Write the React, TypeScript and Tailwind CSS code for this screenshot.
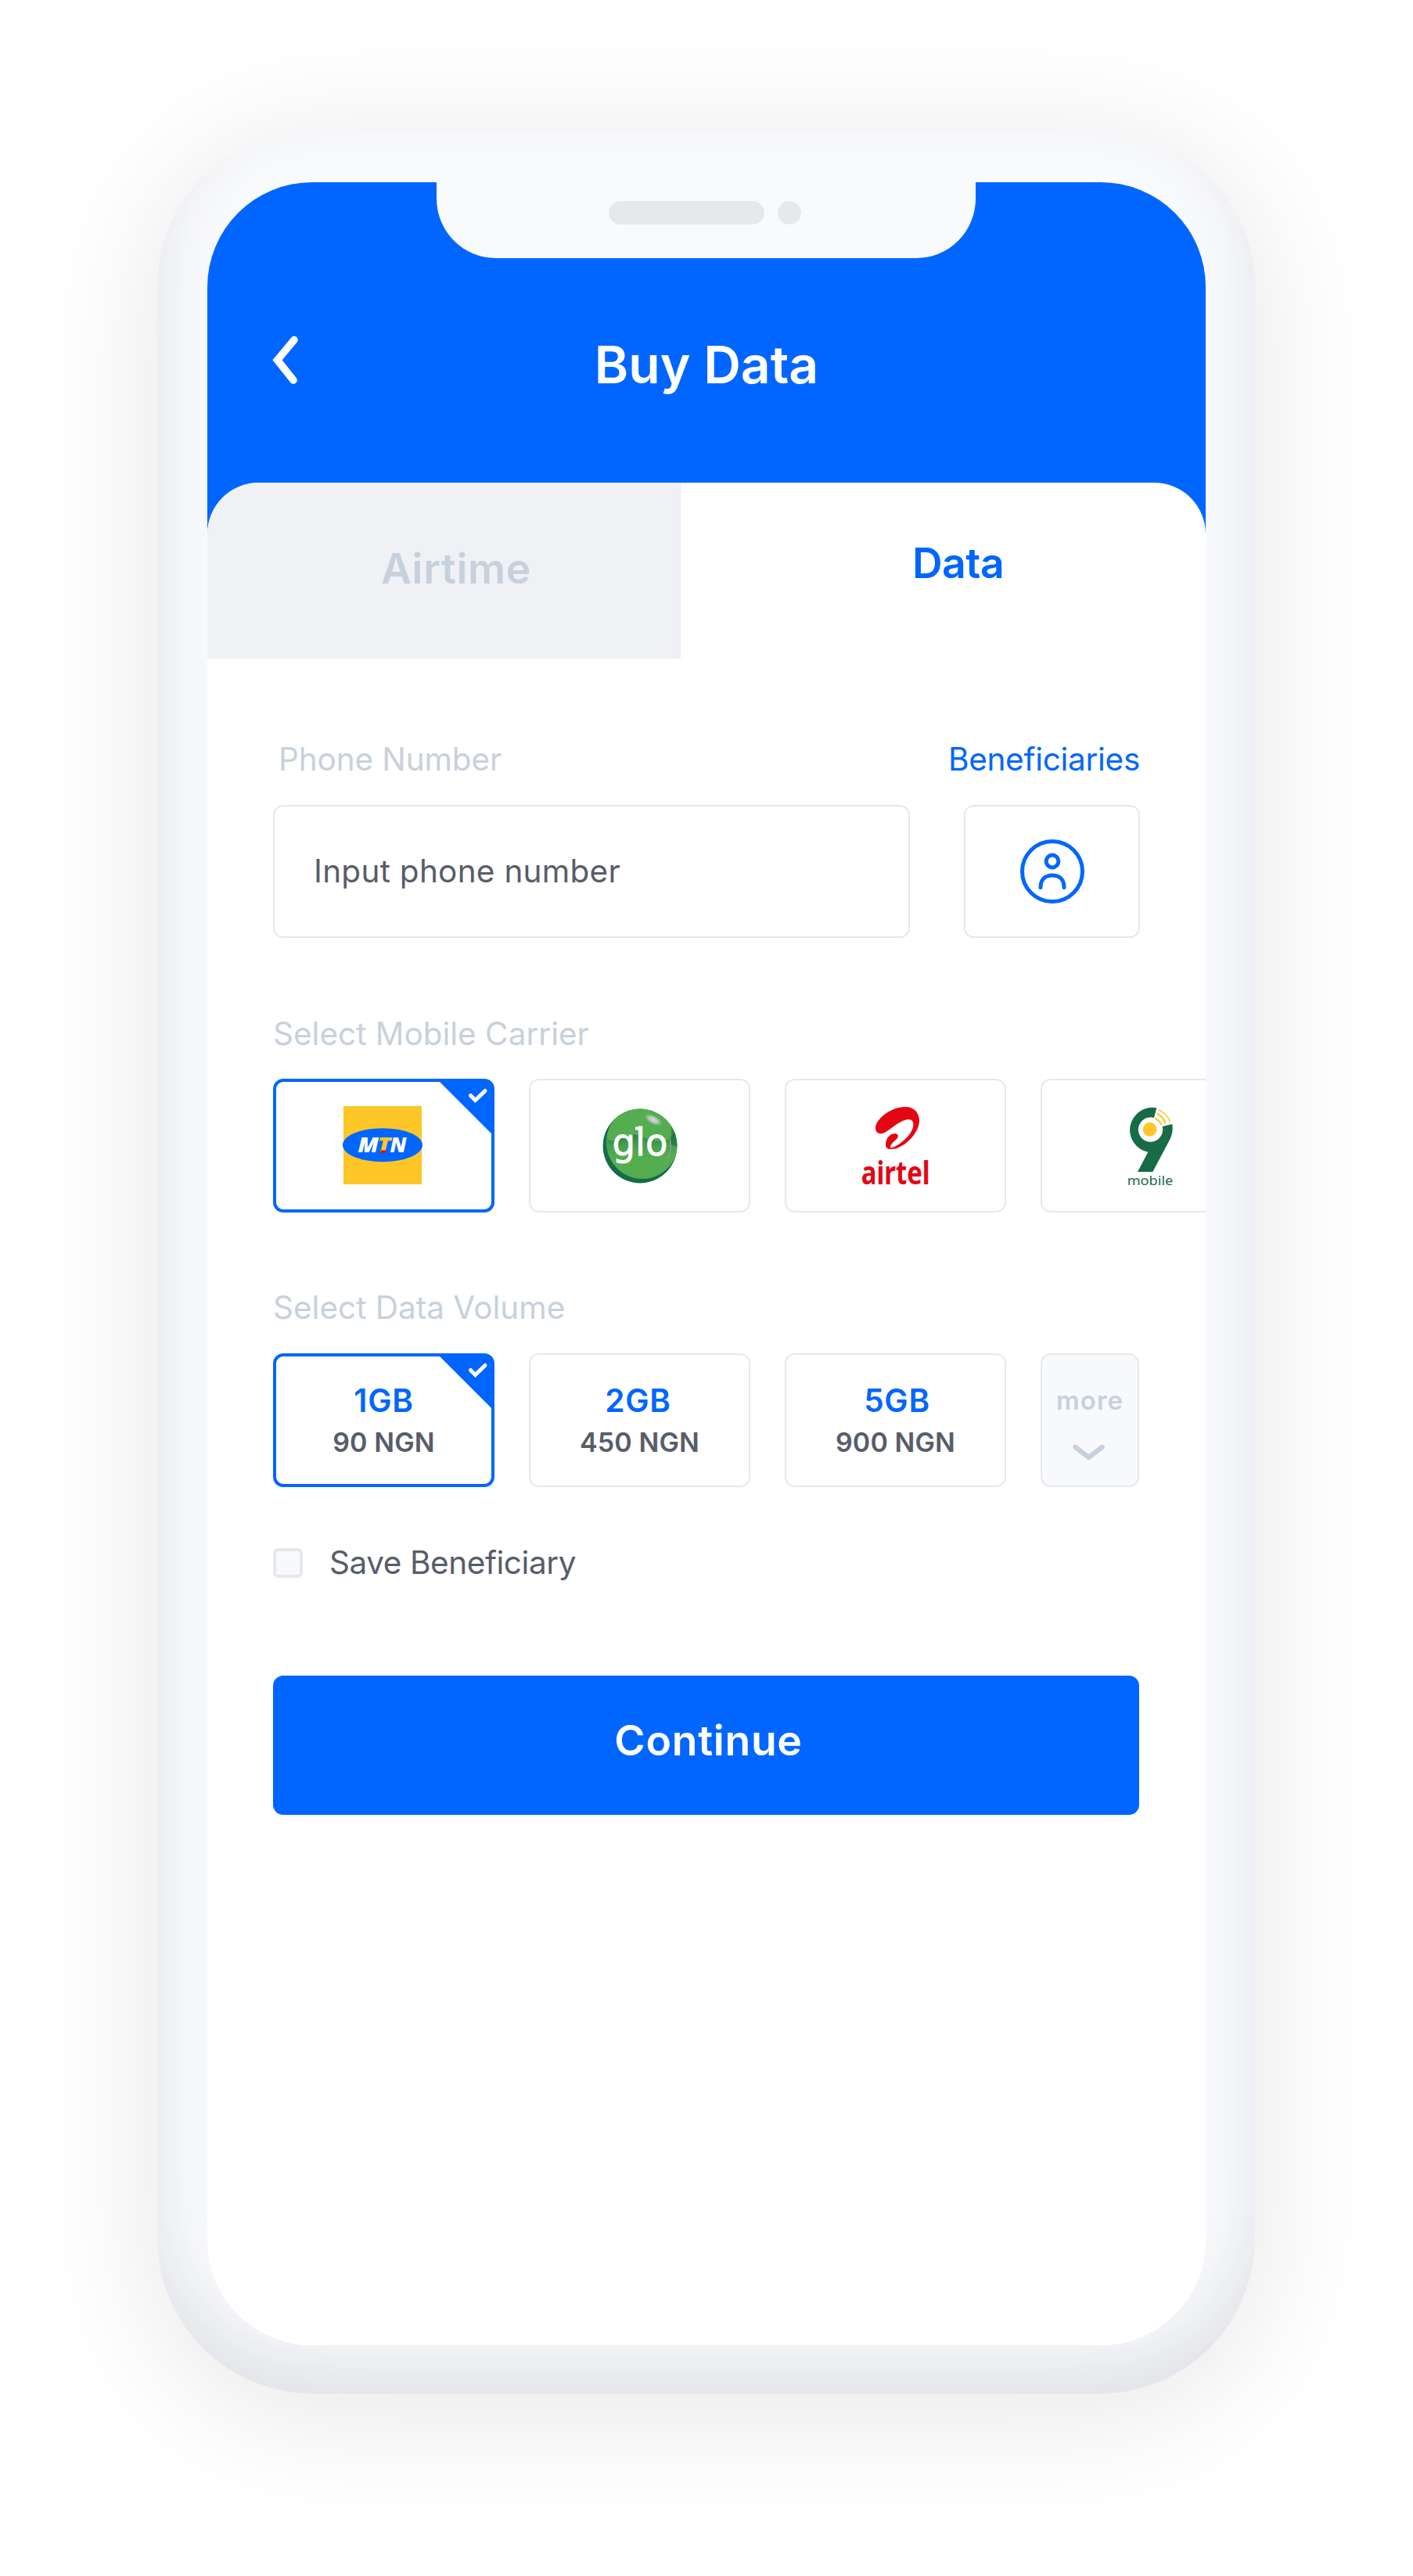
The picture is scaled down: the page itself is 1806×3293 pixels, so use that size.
import type { ReactNode } from "react";

function SelectedCorner() {
  return (
    <svg className="absolute -top-[4px] -right-[4px]" width="72" height="76" viewBox="0 0 72 76">
      <path d="M2 2H58Q70 2 70 14V72L68 70L2 4Z" fill="#0066ff" />
      <path d="M41.5 21.5L47.5 27.5L60 15.5" fill="none" stroke="#fff" strokeWidth="5" strokeLinecap="round" />
    </svg>
  );
}

function Tile({ selected, children }: { selected?: boolean; children: ReactNode }) {
  return (
    <div
      className={
        selected
          ? "relative flex h-[171px] w-[283px] shrink-0 flex-col items-center rounded-[13px] border-4 border-[#0066ff]"
          : "relative flex h-[171px] w-[283px] shrink-0 flex-col items-center rounded-[13px] border-2 border-[#e6e8ec]"
      }
    >
      {children}
      {selected && <SelectedCorner />}
    </div>
  );
}

function MtnLogo() {
  return (
    <svg className="mt-[29px] -ml-[3px]" width="104" height="104" viewBox="0 0 104 104">
      <rect x="2" y="2" width="100" height="100" fill="#fec627" />
      <ellipse cx="52" cy="51.7" rx="51" ry="21.5" fill="#0066ff" />
      <g fontFamily="Noto Sans" fontWeight="900" fontStyle="italic" fontSize="27">
        <text x="20.5" y="61.3" fill="#fff" textLength="26.5" lengthAdjust="spacingAndGlyphs">M</text>
        <text x="45.5" y="61.3" fill="#fec627" textLength="17" lengthAdjust="spacingAndGlyphs">T</text>
        <text x="61.5" y="61.3" fill="#fff" textLength="21" lengthAdjust="spacingAndGlyphs">N</text>
      </g>
      <path d="M50.2 58.6h6l-.7 3.2h-6z" fill="#e30613" />
    </svg>
  );
}

function GloLogo() {
  return (
    <svg className="mt-[36px]" width="96" height="96" viewBox="0 0 96 96">
      <defs>
        <linearGradient id="gloBand" x1="0" y1="0" x2="0" y2="1">
          <stop offset="0" stopColor="#176b47" stopOpacity=".9" />
          <stop offset="1" stopColor="#54ae4f" stopOpacity="0" />
        </linearGradient>
        <radialGradient id="gloShine">
          <stop offset="0" stopColor="#d4dbe3" />
          <stop offset=".5" stopColor="#b8c6bf" />
          <stop offset="1" stopColor="#8fb58c" stopOpacity="0" />
        </radialGradient>
        <clipPath id="gloClip">
          <circle cx="48" cy="48" r="47.4" />
        </clipPath>
      </defs>
      <g clipPath="url(#gloClip)">
        <circle cx="48" cy="48" r="48" fill="#176b47" />
        <ellipse cx="51" cy="43" rx="46" ry="47" fill="#54ae4f" />
        <path d="M6 38C12 46 22 36 35 33C50 32 60 46 84 40L94 28V56C80 64 60 67 44 68C28 68 12 66 6 60Z" fill="url(#gloBand)" />
        <path d="M88 18L97 32V50L88 46Z" fill="#176b47" opacity=".6" />
        <ellipse cx="65" cy="14.5" rx="13" ry="6" fill="url(#gloShine)" transform="rotate(28 65 14.5)" />
        <path d="M85 38Q90 60 74 79Q93 58 86.5 38Z" fill="#9a9fa0" opacity=".6" />
      </g>
      <text x="12.5" y="59.8" fontFamily="DejaVu Sans" fontSize="47.5" fill="#fff" stroke="#fff" strokeWidth=".8" textLength="71" lengthAdjust="spacingAndGlyphs">glo</text>
      <rect x="42" y="23.5" width="7" height="4" fill="#fff" />
    </svg>
  );
}

function AirtelLogo() {
  return (
    <svg className="mt-[33px]" width="88" height="104" viewBox="0 0 264 312">
      <path
        transform="translate(-357 -162)"
        fill="#e30613"
        d="M411 246C411 212 470 165 525 165C560 165 579 188 579 218C579 265 520 327 470 327C456 327 450 320 450 308C450 288 465 268 484 267C500 267 501 280 492 288C480 299 466 312 468 321C478 328 556 280 556 232C556 218 548 212 534 213C510 215 475 245 455 258C430 276 411 266 411 246Z"
      />
      <text x="-1" y="300" fontFamily="Noto Sans" fontWeight="700" fontSize="126" fill="#e30613" textLength="264" lengthAdjust="spacingAndGlyphs">airtel</text>
    </svg>
  );
}

function NineMobileLogo() {
  return (
    <svg className="mt-[33px] -ml-[4px]" width="60" height="106" viewBox="0 0 180 318">
      <g transform="translate(-419 -162)">
        <path
          fill="#176b47"
          d="M534 169A86 86 0 1 0 501 338L461 414H519L583 293C592 276 598 256 594 231L556 240A47 47 0 1 1 524 207Z"
        />
        <circle cx="508" cy="251" r="26.5" fill="#fec627" />
        <g fill="none" stroke="#fec627" strokeLinecap="round">
          <path d="M542 176Q572 190 586 221" strokeWidth="4.5" />
          <path d="M538 192Q558 203 567 225" strokeWidth="7" />
          <path d="M530 210Q544 217 551 231" strokeWidth="7" />
        </g>
      </g>
      <text x="2" y="302" fontFamily="Noto Sans" fontSize="49" fill="#176b47" textLength="176" lengthAdjust="spacingAndGlyphs">mobile</text>
    </svg>
  );
}

function Volume({ size, price, selected, className }: { size: string; price: string; selected?: boolean; className: string }) {
  return (
    <Tile selected={selected}>
      <div className={selected ? "mt-[32px] flex flex-col items-center" : "mt-[34px] flex flex-col items-center"}>
        <span className={`text-[40.5px] leading-[50px] font-semibold tracking-[0.7px] text-[#0066ff] ${className}`}>{size}</span>
        <span className="mt-[6px] text-[34px] leading-[44px] font-semibold tracking-[0.1px] text-[#585d69]">{price}</span>
      </div>
    </Tile>
  );
}

export default function App() {
  return (
    <main className="h-[3293px] w-[1806px] overflow-hidden bg-white pt-[168px] pl-[201px] font-[Inter]">
      <div className="h-[2892px] w-[1403px] rounded-[199px] bg-[#f9fafc] px-[64px] pt-[65px] shadow-[inset_0_-42px_84px_#e1e3e8,0_20px_170px_rgba(0,0,0,0.1)]">
        <div className="relative flex h-[2765px] w-[1276px] flex-col overflow-hidden rounded-[134px] bg-linear-to-b from-[#0066ff] from-[600px] to-white to-[600px]">
          {/* Notch */}
          <div className="absolute top-0 left-[293px] flex h-[97px] w-[689px] justify-center gap-[17px] rounded-b-[76px] bg-[#f9fafc] pt-[24px] pr-[4px]">
            <div className="h-[30px] w-[199px] rounded-full bg-[#e6e8ec]" />
            <div className="size-[30px] rounded-full bg-[#e6e8ec]" />
          </div>

          <header className="grid h-[384px] shrink-0 grid-cols-[1fr_auto_1fr] items-start px-[83px] pt-[193px]">
            <svg className="mt-[2px]" width="34" height="64" viewBox="0 0 34 64">
              <path d="M28 6.5L6.5 32.3L27 58" fill="none" stroke="#fff" strokeWidth="9.5" strokeLinecap="round" />
            </svg>
            <h1 className="text-[66px] leading-[80px] font-semibold text-white">Buy Data</h1>
          </header>

          <section className="flex-1 rounded-t-[66px] bg-white">
            <div className="flex h-[225px]">
              <div className="flex w-[605px] justify-center rounded-tl-[66px] bg-[#eff1f5] pt-[78px] pl-[31px]">
                <span className="text-[53.5px] leading-[64px] font-semibold tracking-[0.6px] text-[#c7d1db]">Airtime</span>
              </div>
              <div className="flex flex-1 justify-center pt-[71px] pl-[38px]">
                <span className="text-[53.5px] leading-[64px] font-semibold tracking-[-0.5px] text-[#0066ff]">Data</span>
              </div>
            </div>

            <div className="px-[84px] text-[40.5px] leading-[50px]">
              <div className="flex justify-between pt-[104px] pl-[7px]">
                <span className="tracking-[-0.13px] text-[#c7d1db]">Phone Number</span>
                <span className="tracking-[-0.29px] text-[#0066ff]">Beneficiaries</span>
              </div>
              <div className="mt-[33px] flex justify-between">
                <div className="flex h-[170px] w-[814px] items-center rounded-[13px] border-2 border-[#e6e8ec] pl-[50px] tracking-[0.27px] text-[#585d69]">
                  Input phone number
                </div>
                <div className="flex h-[170px] w-[225px] items-center justify-center rounded-[13px] border-2 border-[#e6e8ec]">
                  <svg width="82" height="82" viewBox="0 0 82 82" fill="none" stroke="#0066ff" strokeWidth="5" strokeLinecap="round">
                    <circle cx="41" cy="41" r="38.5" />
                    <circle cx="41" cy="28" r="7.9" />
                    <path d="M26 61.5C26 51 32 46 41 46S56 51 56 61.5" />
                  </svg>
                </div>
              </div>

              <p className="mt-[98px] text-[#c7d1db]">Select Mobile Carrier</p>
              <div className="mt-[32px] flex gap-[44px]">
                <Tile selected><MtnLogo /></Tile>
                <Tile><GloLogo /></Tile>
                <Tile><AirtelLogo /></Tile>
                <Tile><NineMobileLogo /></Tile>
              </div>

              <p className="mt-[97px] text-[#c7d1db]">Select Data Volume</p>
              <div className="mt-[33px] flex gap-[44px]">
                <Volume selected size="1GB" price="90 NGN" className="" />
                <Volume size="2GB" price="450 NGN" className="-ml-[4px]" />
                <Volume size="5GB" price="900 NGN" className="ml-[4px]" />
                <div className="flex h-[171px] w-[126px] shrink-0 flex-col items-center rounded-[13px] border-2 border-[#e6e8ec] bg-[#f8f9fb] pt-[36px]">
                  <span className="text-[33px] leading-[44px] font-semibold tracking-[1.1px] text-[#c7d1db]">more</span>
                  <svg className="mt-[33px] -ml-[4px]" width="44" height="26" viewBox="0 0 44 26">
                    <path d="M5.5 5L22.5 18L39.5 5" fill="none" stroke="#c7d1db" strokeWidth="6.5" strokeLinecap="round" />
                  </svg>
                </div>
              </div>

              <div className="mt-[72px] flex items-center">
                <div className="size-[38px] rounded-[6px] border-4 border-[#e6e8ec] bg-[#f8f9fb]" />
                <span className="ml-[34px] tracking-[-0.43px] text-[#585d69]">Save Beneficiary</span>
              </div>

              <button className="mt-[119px] flex h-[178px] w-[1107px] justify-center rounded-[13px] bg-[#0066ff] pt-[51px] pl-[6px] text-[53.5px] leading-[64px] font-semibold tracking-[0.7px] text-white">
                Continue
              </button>
            </div>
          </section>
        </div>
      </div>
    </main>
  );
}
